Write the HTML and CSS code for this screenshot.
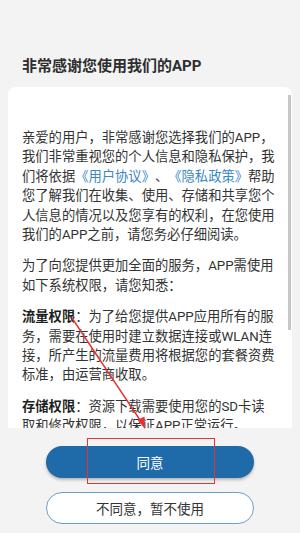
FILE: index.html
```html
<!DOCTYPE html>
<html lang="zh-CN">
<head>
    <meta charset="UTF-8">
    <meta name="viewport" content="width=device-width, initial-scale=1.0">
    <title>隐私协议</title>
    <link rel="stylesheet" href="styles.css">
</head>
<body>
    <div class="page">
        <h1 class="title">非常感谢您使用我们的APP</h1>
        <div class="card">
            <div class="card-body">
                <p>亲爱的用户，非常感谢您选择我们的APP，我们非常重视您的个人信息和隐私保护，我们将依据<a class="link">《用户协议》</a>、<a class="link">《隐私政策》</a>帮助您了解我们在收集、使用、存储和共享您个人信息的情况以及您享有的权利，在您使用我们的APP之前，请您务必仔细阅读。</p>
                <p>为了向您提供更加全面的服务，APP需使用如下系统权限，请您知悉：</p>
                <p><strong>流量权限</strong>：为了给您提供APP应用所有的服务，需要在使用时建立数据连接或WLAN连接，所产生的流量费用将根据您的套餐资费标准，由运营商收取。</p>
                <p><strong>存储权限</strong>：资源下载需要使用您的SD卡读取和修改权限，以保证APP正常运行。</p>
            </div>
            <div class="scroll-thumb"></div> <!-- 滚动条 -->
        </div>
        <div class="actions">
            <button class="btn btn-agree">同意</button>
            <button class="btn btn-refuse">不同意，暂不使用</button>
        </div>
    </div>

    <!-- 红色标注 -->
    <div class="mark-box"></div>
    <svg class="mark-arrow" width="300" height="533" viewBox="0 0 300 533">
        <line x1="72" y1="318" x2="142" y2="423" stroke="#e8322f" stroke-width="1.4"/>
        <polygon points="145,429 137.5,420 144.5,416.5" fill="#e8322f"/>
    </svg>
</body>
</html>
```

FILE: styles.css
```css
body {
    margin: 0;
    background: #f3f3f3;
    font-family: Roboto, "Noto Sans CJK SC", sans-serif;
    color: #333;
}
.page {
    height: 533px;
    overflow: hidden;
    padding-top: 56px;
    box-sizing: border-box;
}
.title {
    font-size: 15px;
    line-height: 20px;
    font-weight: bold;
    color: #2e2e2e;
    margin: 0 0 11px 22px;
}
.card {
    position: relative;
    margin: 0 8px;
    height: 341px;
    background: #fff;
    border-radius: 8px 8px 0 0;
    overflow: hidden;
}
.card-body {
    padding: 27px 15px 0 14px;
    font-size: 13.3px;
    line-height: 19.4px;
    text-spacing-trim: space-all; /* 标点保持全角 */
}
.card-body p {
    margin: 12px 0 0 0;
}
.card-body p:first-child {
    margin-top: 14px;
}
.card-body strong {
    color: #1e1e1e;
}
.link {
    color: #3b86c6;
}
.scroll-thumb {
    position: absolute;
    right: 1px;
    top: 8px;
    width: 3px;
    height: 235px;
    background: #c6c6c6;
}
.actions {
    display: flex;
    flex-direction: column;
    align-items: center;
    gap: 14px;
    padding-top: 18px;
}
.btn {
    width: 208px;
    height: 32px;
    border-radius: 16px;
    font-family: Roboto, "Noto Sans CJK SC", sans-serif;
    font-size: 13.5px;
    padding: 0;
    box-sizing: border-box;
}
.btn-agree {
    background: #1f6aa8;
    color: #fff;
    border: none;
    box-shadow: 0 2px 3px rgba(0, 0, 0, 0.25);
}
.btn-refuse {
    background: #fff;
    color: #333;
    border: 1px solid #6e9ecb;
}
.mark-box {
    position: absolute;
    left: 87px;
    top: 438px;
    width: 128px;
    height: 46px;
    border: 1.5px solid #e8322f;
    box-sizing: border-box;
}
.mark-arrow {
    position: absolute;
    left: 0;
    top: 0;
    pointer-events: none;
}
```
